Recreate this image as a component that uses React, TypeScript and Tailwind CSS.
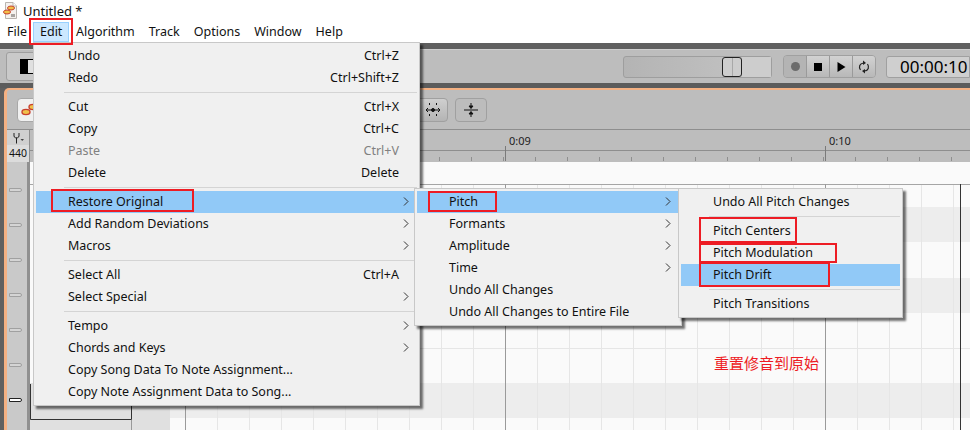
const sans = "font-['Noto_Sans','Liberation_Sans',sans-serif]";

type Row =
  | { sep: true }
  | { sep?: false; label: string; keys?: string; sub?: boolean; on?: boolean; off?: boolean };

const editRows: Row[] = [
  { label: "Undo", keys: "Ctrl+Z" },
  { label: "Redo", keys: "Ctrl+Shift+Z" },
  { sep: true },
  { label: "Cut", keys: "Ctrl+X" },
  { label: "Copy", keys: "Ctrl+C" },
  { label: "Paste", keys: "Ctrl+V", off: true },
  { label: "Delete", keys: "Delete" },
  { sep: true },
  { label: "Restore Original", sub: true, on: true },
  { label: "Add Random Deviations", sub: true },
  { label: "Macros", sub: true },
  { sep: true },
  { label: "Select All", keys: "Ctrl+A" },
  { label: "Select Special", sub: true },
  { sep: true },
  { label: "Tempo", sub: true },
  { label: "Chords and Keys", sub: true },
  { label: "Copy Song Data To Note Assignment..." },
  { label: "Copy Note Assignment Data to Song..." },
];

const restoreRows: Row[] = [
  { label: "Pitch", sub: true, on: true },
  { label: "Formants", sub: true },
  { label: "Amplitude", sub: true },
  { label: "Time", sub: true },
  { label: "Undo All Changes" },
  { label: "Undo All Changes to Entire File" },
];

const pitchRows: Row[] = [
  { label: "Undo All Pitch Changes" },
  { sep: true },
  { label: "Pitch Centers" },
  { label: "Pitch Modulation" },
  { label: "Pitch Drift", on: true },
  { sep: true },
  { label: "Pitch Transitions" },
];

function Chevron() {
  return (
    <svg width="6" height="9" viewBox="0 0 6 9" className="absolute right-[8px] top-[6px]">
      <path d="M1 0.5 L5 4.5 L1 8.5" fill="none" stroke="#333" strokeWidth="1" />
    </svg>
  );
}

function Menu({ rows, className }: { rows: Row[]; className: string }) {
  return (
    <div className={`absolute border border-[#c8c8c8] bg-[#f0f0f0] p-[2px] text-[12.5px] text-[#111] shadow-[3px_3px_2px_rgba(0,0,0,0.55)] ${className}`}>
      {rows.map((r, i) =>
        r.sep ? (
          <div key={i} className="flex h-[7px] items-center pl-[28px]">
            <div className="h-px w-full bg-[#d4d4d4]" />
          </div>
        ) : (
          <div
            key={i}
            className={`relative flex h-[22px] items-center justify-between pl-[32px] pr-[18px] leading-none ${r.on ? "bg-[#91c9f7]" : ""} ${r.off ? "text-[#808080]" : ""}`}
          >
            <span>{r.label}</span>
            {r.keys && <span>{r.keys}</span>}
            {r.sub && <Chevron />}
          </div>
        ),
      )}
    </div>
  );
}

function DocIcon() {
  return (
    <svg width="15" height="18" viewBox="0 0 15 18">
      <path d="M2.5 .5 H10 L13.5 4 V16.5 H2.5 Z" fill="#f4f1ee" stroke="#b9b4b0" />
      <path d="M10 .5 V4 H13.5" fill="#fff" stroke="#b9b4b0" />
      <ellipse cx="8" cy="6" rx="3.5" ry="2" fill="#f0c04a" stroke="#c8402e" />
      <ellipse cx="4" cy="10" rx="3.5" ry="2" fill="#f0c04a" stroke="#c8402e" />
      <rect x="8" y="12" width="4" height="3" fill="#a9a5a2" />
    </svg>
  );
}

function NotesIcon() {
  return (
    <svg width="16" height="16" viewBox="0 0 16 16">
      <ellipse cx="12" cy="5" rx="4" ry="2.6" fill="#f0c04a" stroke="#c8402e" strokeWidth="1.4" />
      <ellipse cx="5" cy="10" rx="4" ry="2.6" fill="#f0c04a" stroke="#c8402e" strokeWidth="1.4" />
    </svg>
  );
}

function Transport() {
  const cell = "flex w-[23px] items-center justify-center border-l border-[#9a9a9a] bg-gradient-to-b from-[#d2d2d2] to-[#b8b8b8]";
  return (
    <div className="flex h-[23px] overflow-hidden rounded-[4px] border border-[#a0a0a0]">
      <div className="flex w-[22px] items-center justify-center bg-[#b4b4b4]">
        <div className="size-[9px] rounded-full bg-[#6c6c6c]" />
      </div>
      <div className={cell}>
        <div className="size-[8px] bg-black" />
      </div>
      <div className={cell}>
        <svg width="9" height="10" viewBox="0 0 9 10">
          <path d="M0.5 0 L8.5 5 L0.5 10 Z" fill="#000" />
        </svg>
      </div>
      <div className={cell}>
        <svg width="12" height="14" viewBox="0 0 12 14" fill="none" stroke="#222" strokeWidth="1.2">
          <path d="M2.5 10 C0.5 7 1.5 3.5 5.5 3" />
          <path d="M9.5 4 C11.5 7 10.5 10.5 6.5 11" />
          <path d="M5 0.5 L8 3 L5 5 Z" fill="#222" stroke="none" />
          <path d="M7 9 L4 11 L7 13.5 Z" fill="#222" stroke="none" />
        </svg>
      </div>
    </div>
  );
}

function Ruler() {
  const ticks = Array.from({ length: 30 }, (_, i) => 25 + i * 32);
  return (
    <svg width="940" height="31" className="block">
      <line x1="0" y1="20.5" x2="940" y2="20.5" stroke="#8e8e8e" />
      {ticks.map((x) => (
        <line key={x} x1={x + 0.5} y1="27" x2={x + 0.5} y2="31" stroke="#8e8e8e" />
      ))}
      <line x1="475.5" y1="16" x2="475.5" y2="31" stroke="#7a7a7a" />
      <line x1="795.5" y1="16" x2="795.5" y2="31" stroke="#7a7a7a" />
    </svg>
  );
}

// piano roll, origin at x=30 y=162
function Grid() {
  const minors = Array.from({ length: 30 }, (_, i) => 155 + i * 32);
  const bands = [45, 116, 221];
  return (
    <svg width="940" height="268" className="block shrink-0">
      <rect width="940" height="268" fill="#fafafa" />
      {bands.map((y) => (
        <rect key={y} x="140" y={y} width="800" height="35" fill="#ededed" />
      ))}
      {minors.map((x) => (
        <line key={x} x1={x + 0.5} y1="22" x2={x + 0.5} y2="268" stroke="#e6e6e6" />
      ))}
      <line x1="140" y1="186.5" x2="940" y2="186.5" stroke="#e6e6e6" />
      <line x1="0" y1="22.5" x2="940" y2="22.5" stroke="#a5a5a5" />
      {[155, 475, 795].map((x) => (
        <line key={x} x1={x + 0.5} y1="22" x2={x + 0.5} y2="268" stroke="#9a9a9a" />
      ))}
      <line x1="930.5" y1="22" x2="930.5" y2="268" stroke="#333" />
      <rect x="0" y="221" width="140" height="47" fill="#e0e0e0" />
      <path d="M0.5 222 V257.5 H101.5 V244" fill="none" stroke="#333" />
      <path d="M101.5 258 V268" stroke="#999" />
    </svg>
  );
}

export default function App() {
  return (
    <div className={`relative h-[430px] w-[970px] overflow-hidden bg-white text-[12.5px] text-[#111] ${sans}`}>
      {/* title bar */}
      <div className="flex h-[21px] items-center gap-[5px] pl-[3px]">
        <DocIcon />
        <span className="pt-[2px] text-[13px]">Untitled *</span>
      </div>

      {/* menu bar */}
      <div className="flex h-[22px] items-center">
        <div className="flex h-[20px] w-[33px] items-center pt-[1px] pl-[7px]">File</div>
        <div className="flex h-[20px] w-[36px] items-center border border-[#99d1ff] bg-[#cce8ff] pt-[1px] pl-[6px]">Edit</div>
        {["Algorithm", "Track", "Options", "Window", "Help"].map((m) => (
          <div key={m} className="flex h-[20px] items-center px-[7px] pt-[1px]">
            {m}
          </div>
        ))}
      </div>

      <div className="h-[6px] bg-[#606060]" />

      {/* main toolbar */}
      <div className="flex h-[34px] items-center border-t border-[#d0d0d0] bg-[#bdbdbd] pl-[6px]">
        <div className="flex h-[29px] w-[60px] items-center rounded-[3px] border border-[#9f9f9f] bg-[#c9c9c9] pl-[13px]">
          <div className="h-[15px] w-[7px] bg-black" />
          <div className="h-[15px] w-[7px] border border-black bg-[#e0e0e0]" />
        </div>
        <div className="ml-[557px] flex h-[22px] w-[149px] rounded-[3px] border border-[#9e9e9e] bg-gradient-to-r from-[#b4b4b4] to-[#c4c4c4]">
          <div className="ml-[98px] flex h-full w-[20px] justify-center rounded-[3px] border border-[#222] bg-[#cdcdcd]">
            <div className="w-px bg-[#a8a8a8]" />
          </div>
          <div className="flex-1 bg-[#cdcdcd]" />
        </div>
        <div className="ml-[11px]">
          <Transport />
        </div>
        <div className="ml-[10px] flex h-[22px] flex-1 items-center rounded-l-[3px] border border-[#a0a0a0] bg-[#cfcfcf] pt-[1px] pl-[13px] text-[17px] whitespace-nowrap text-black">
          00:00:10
        </div>
      </div>

      <div className="h-[5px] bg-[#5c5c5c]" />

      {/* editor */}
      <div className="flex h-[342px] bg-[#606060] pl-[4px]">
        <div className="flex min-w-0 flex-1 flex-col overflow-hidden rounded-tl-[5px] border-t-2 border-l-[3px] border-[#f4b183] bg-[#bdbdbd]">
          <div className="flex h-[40px] shrink-0 items-center border-b border-[#8e8e8e] pl-[10px]">
            <div className="flex h-[24px] w-[33px] items-center rounded-[4px] border border-[#a8a8a8] bg-[#f0f0f0] pl-[3px]">
              <NotesIcon />
            </div>
            <div className="ml-[364px] flex h-[24px] w-[34px] items-center justify-end rounded-[4px] border border-[#a0a0a0] bg-gradient-to-b from-[#cfcfcf] to-[#b4b4b4] pr-[7px]">
              <svg width="14" height="14" viewBox="0 0 14 14" stroke="#111" fill="none">
                <path d="M3.5 0 V3 M10.5 0 V3 M3.5 11 V14 M10.5 11 V14" strokeDasharray="2 1" />
                <path d="M0 7 H14 M2 5 L0 7 L2 9 M12 5 L14 7 L12 9" />
                <circle cx="7" cy="7" r="1.5" fill="#111" />
              </svg>
            </div>
            <div className="ml-[7px] flex h-[24px] w-[32px] items-center justify-center rounded-[4px] border border-[#a0a0a0] bg-[#bcbcbc]">
              <svg width="14" height="16" viewBox="0 0 14 16" stroke="#111" fill="none">
                <path d="M0 8 H14 M7 1 V6 M7 10 V15" />
                <path d="M5 4 L7 6.5 L9 4 Z M5 12 L7 9.5 L9 12 Z" fill="#111" />
              </svg>
            </div>
          </div>

          <div className="flex h-[32px] shrink-0">
            <div className="flex w-[23px] shrink-0 flex-col border-r border-[#8e8e8e]">
              <div className="flex h-[15px] items-center justify-center bg-[#d0d0d0]">
                <svg width="12" height="12" viewBox="0 0 12 12" fill="none" stroke="#222">
                  <path d="M2 1 V4 C2 6 5 6 5 6 M7 1 V4 C7 6 4 6 4 6 M4.5 6 V11.5" />
                  <path d="M8.5 7 H12 L10.2 9 Z" fill="#444" stroke="none" />
                </svg>
              </div>
              <div className="flex h-[17px] items-center justify-center bg-[#dcdcdc] text-[10.5px] leading-none text-[#111]">440</div>
            </div>
            <div className="relative flex-1">
              <Ruler />
              <span className="absolute top-[3px] left-[479px] text-[11px] leading-[15px] text-[#222]">0:09</span>
              <span className="absolute top-[3px] left-[799px] text-[11px] leading-[15px] text-[#222]">0:10</span>
            </div>
          </div>

          <div className="flex h-[268px] shrink-0">
            <div className="flex w-[23px] shrink-0 flex-col border-r-[3px] border-[#909090] bg-[#c9c9c9] pt-[26px]">
              {[0, 1, 2, 3, 4, 5, 6].map((i) => (
                <div key={i} className="flex h-[35px] shrink-0 items-start pl-[2px]">
                  <div className={`h-[4px] w-[13px] rounded-r-[2px] border ${i === 6 ? "border-[#222] bg-white" : "border-[#a0a0a0] bg-[#d4d4d4]"}`} />
                </div>
              ))}
            </div>
            <Grid />
          </div>
        </div>
      </div>

      {/* open menus */}
      <Menu rows={editRows} className="top-[42px] left-[33px] w-[387px]" />
      <Menu rows={restoreRows} className="top-[188px] left-[414px] w-[268px]" />
      <Menu rows={pitchRows} className="top-[188px] left-[678px] w-[225px]" />

      {/* red annotation boxes */}
      <div className="absolute top-[18px] left-[29px] h-[27px] w-[44px] border-2 border-[#ed1c24]" />
      <div className="absolute top-[189px] left-[51px] h-[23px] w-[143px] border-2 border-[#ed1c24]" />
      <div className="absolute top-[191px] left-[428px] h-[21px] w-[69px] border-2 border-[#ed1c24]" />
      <div className="absolute top-[217px] left-[699px] h-[26px] w-[98px] border-2 border-[#ed1c24]" />
      <div className="absolute top-[243px] left-[699px] h-[20px] w-[138px] border-2 border-[#ed1c24]" />
      <div className="absolute top-[262px] left-[699px] h-[25px] w-[131px] border-2 border-[#ed1c24]" />
      <span className="absolute top-[353px] left-[714px] text-[15px] leading-[20px] text-[#ed1c24] font-['Noto_Sans_CJK_SC',sans-serif]">重置修音到原始</span>
    </div>
  );
}
